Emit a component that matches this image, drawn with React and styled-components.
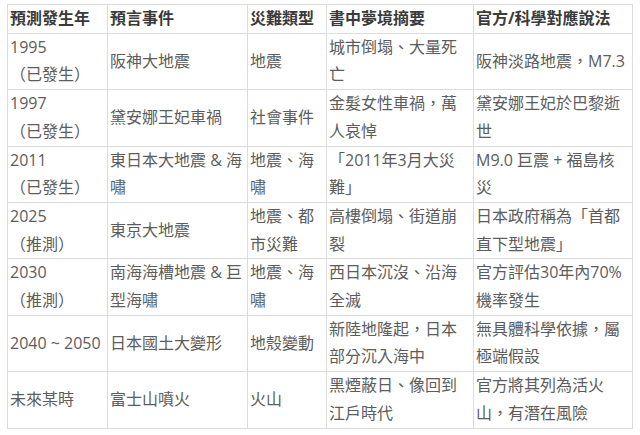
import styled, { createGlobalStyle } from "styled-components"

const GlobalStyle = createGlobalStyle`
    html, body {
        margin: 0;
        padding: 0;
        background: #fff;
    }
    body {
        font-family: "Open Sans", "Noto Sans CJK TC", "Noto Sans CJK SC", sans-serif;
    }
`

const columns = [
    { title: "預測發生年", width: 100 },
    { title: "預言事件", width: 140 },
    { title: "災難類型", width: 79 },
    { title: "書中夢境摘要", width: 147 },
    { title: "官方/科學對應說法", width: 159 },
]

const rows = [
    ["1995\n（已發生）", "阪神大地震", "地震", "城市倒塌、大量死亡", "阪神淡路地震，M7.3"],
    ["1997\n（已發生）", "黛安娜王妃車禍", "社會事件", "金髮女性車禍，萬人哀悼", "黛安娜王妃於巴黎逝世"],
    ["2011\n（已發生）", "東日本大地震 & 海嘯", "地震、海嘯", "「2011年3月大災難」", "M9.0 巨震 + 福島核災"],
    ["2025\n（推測）", "東京大地震", "地震、都市災難", "高樓倒塌、街道崩裂", "日本政府稱為「首都直下型地震」"],
    ["2030\n（推測）", "南海海槽地震 & 巨型海嘯", "地震、海嘯", "西日本沉沒、沿海全滅", "官方評估30年內70%機率發生"],
    ["2040 ~ 2050", "日本國土大變形", "地殼變動", "新陸地隆起，日本部分沉入海中", "無具體科學依據，屬極端假設"],
    ["未來某時", "富士山噴火", "火山", "黑煙蔽日、像回到江戶時代", "官方將其列為活火山，有潛在風險"],
]

export default function App() {
    return (
        <Page lang="zh-Hant-TW">
            <GlobalStyle />
            <Table>
                <colgroup>
                    {columns.map((c) => <col key={c.title} style={{ width: c.width }} />)}
                </colgroup>
                <thead>
                    <tr>
                        {columns.map((c) => <HeadCell key={c.title}>{c.title}</HeadCell>)}
                    </tr>
                </thead>
                <tbody>
                    {rows.map((row, i) =>
                        <Row key={i}>
                            {row.map((text, j) =>
                                <Cell key={j}>
                                    {text.split("\n").map((line, k) => <Line key={k}>{line}</Line>)}
                                </Cell>)}
                        </Row>)}
                </tbody>
            </Table>
        </Page>
    )
}

const Page = styled.div`
    padding: 4px 0 0 7px;
`

const Table = styled.table`
    border-collapse: collapse;
    table-layout: fixed;
    width: 625px;
    font-size: 16px;
    line-height: 27.7px;
`

const HeadCell = styled.th`
    border: 1px solid #dcdcdc;
    padding: 0 2px;
    text-align: left;
    font-weight: bold;
    color: #3a3a3a;
    vertical-align: middle;
`

const Row = styled.tr`
    height: 56.4px;
`

const Cell = styled.td`
    border: 1px solid #dcdcdc;
    padding: 0 2px;
    color: #5c5c5c;
    vertical-align: middle;
    word-break: normal;
    line-break: strict;
`

const Line = styled.span`
    display: block;
`
